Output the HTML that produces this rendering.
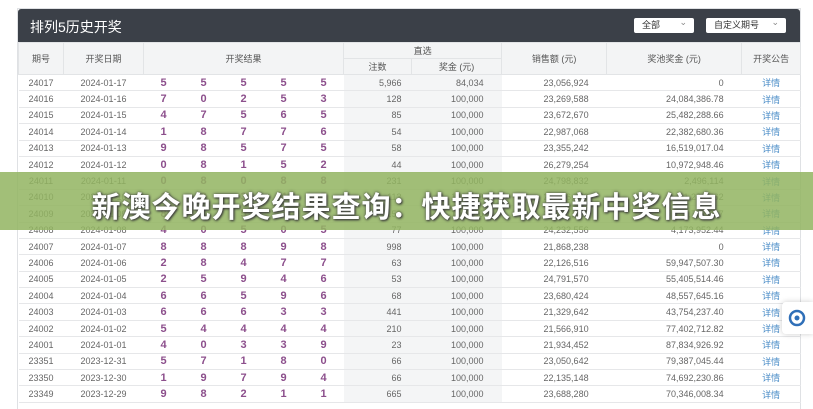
<!DOCTYPE html>
<html><head><meta charset="utf-8"><style>
body{margin:0;width:813px;height:400px;overflow:hidden;background:#fff;font-family:"Liberation Sans","Noto Sans CJK SC",sans-serif;position:relative}
.card{position:absolute;left:17px;top:8px;width:782px;height:400px;border:1px solid #dfe1e4;border-bottom:none;background:#fff}
.hd{height:33px;background:#3b4048;border-radius:3px 3px 0 0;position:relative}
.hd .t{position:absolute;left:12px;top:8px;color:#fff;font-size:14px}
.sel{position:absolute;top:9px;height:15px;background:#fff;border-radius:2px;font-size:9px;color:#333;line-height:15px;padding-left:8px;box-sizing:border-box}
.sel:after{content:"⌄";position:absolute;right:7px;top:-3px;color:#888;font-size:9px}
table{border-collapse:collapse;table-layout:fixed;font-size:9px;color:#666}
th{font-weight:normal;color:#555;background:#f3f4f5;border:1px solid #e2e4e6;height:15px;padding:0}
td{height:15.4px;padding:0;border-bottom:1px solid #e6e7e9;text-align:center}
td.n{color:#8c4f8c;font-size:11px;font-weight:bold}
td.g{background:#f4f5f6;text-align:right;padding-right:10px}
td.r{text-align:right;padding-right:18px}
td.l{color:#4a8cc7}
.ban{position:absolute;left:0;top:172px;width:813px;height:58px;background:rgba(146,180,96,.85)}
.ban span{position:absolute;left:0;right:0;top:12px;text-align:center;color:#fff;font-size:29px;font-weight:bold;letter-spacing:1px;text-shadow:0 0 3px #444,1px 1px 2px #333}
.ic{position:absolute;left:782px;top:302px;width:31px;height:32px;background:#fff;box-shadow:0 0 6px rgba(0,0,0,.2);border-radius:4px 0 0 4px}
</style></head><body>
<div class="card">
<div class="hd"><div class="t">排列5历史开奖</div>
<div class="sel" style="left:616px;width:60px">全部</div>
<div class="sel" style="left:688px;width:80px">自定义期号</div></div>
<table style="width:782px">
<colgroup><col style="width:45px"><col style="width:80px"><col style="width:40px"><col style="width:40px"><col style="width:40px"><col style="width:40px"><col style="width:40px"><col style="width:68px"><col style="width:90px"><col style="width:105px"><col style="width:135px"><col style="width:59px"></colgroup>
<tr><th rowspan="2">期号</th><th rowspan="2">开奖日期</th><th colspan="5" rowspan="2">开奖结果</th><th colspan="2">直选</th><th rowspan="2">销售额 (元)</th><th rowspan="2">奖池奖金 (元)</th><th rowspan="2">开奖公告</th></tr>
<tr><th>注数</th><th>奖金 (元)</th></tr>
<tbody id="b"></tbody></table>
</div>
<script>
var d=[["24017","2024-01-17","55555","5,966","84,034","23,056,924","0"],
["24016","2024-01-16","70253","128","100,000","23,269,588","24,084,386.78"],
["24015","2024-01-15","47565","85","100,000","23,672,670","25,482,288.66"],
["24014","2024-01-14","18776","54","100,000","22,987,068","22,382,680.36"],
["24013","2024-01-13","98575","58","100,000","23,355,242","16,519,017.04"],
["24012","2024-01-12","08152","44","100,000","26,279,254","10,972,948.46"],
["24011","2024-01-11","08088","231","100,000","24,798,832","2,496,114"],
["24010","2024-01-10","12345","113","100,000","23,456,789","1,234,562"],
["24009","2024-01-09","81535","150","100,000","23,761,714","3,717,307"],
["24008","2024-01-08","40505","77","100,000","24,232,556","4,173,952.44"],
["24007","2024-01-07","88898","998","100,000","21,868,238","0"],
["24006","2024-01-06","28477","63","100,000","22,126,516","59,947,507.30"],
["24005","2024-01-05","25946","53","100,000","24,791,570","55,405,514.46"],
["24004","2024-01-04","66596","68","100,000","23,680,424","48,557,645.16"],
["24003","2024-01-03","66633","441","100,000","21,329,642","43,754,237.40"],
["24002","2024-01-02","54444","210","100,000","21,566,910","77,402,712.82"],
["24001","2024-01-01","40339","23","100,000","21,934,452","87,834,926.92"],
["23351","2023-12-31","57180","66","100,000","23,050,642","79,387,045.44"],
["23350","2023-12-30","19794","66","100,000","22,135,148","74,692,230.86"],
["23349","2023-12-29","98211","665","100,000","23,688,280","70,346,008.34"]];
var h="";d.forEach(function(r){h+="<tr><td>"+r[0]+"</td><td>"+r[1]+"</td>";for(var i=0;i<5;i++)h+='<td class="n">'+r[2][i]+"</td>";h+='<td class="g">'+r[3]+'</td><td class="g" style="padding-right:18px">'+r[4]+'</td><td class="r">'+r[5]+'</td><td class="r">'+r[6]+'</td><td class="l">详情</td></tr>'});
document.getElementById("b").innerHTML=h;
</script>
<div class="ban"><span>新澳今晚开奖结果查询：快捷获取最新中奖信息</span></div>
<div class="ic"><svg width="31" height="32" viewBox="0 0 31 32"><circle cx="15" cy="16" r="7" fill="none" stroke="#2f6fb8" stroke-width="2.5"/><circle cx="15" cy="16" r="2.5" fill="#2f6fb8"/></svg></div>
</body></html>
